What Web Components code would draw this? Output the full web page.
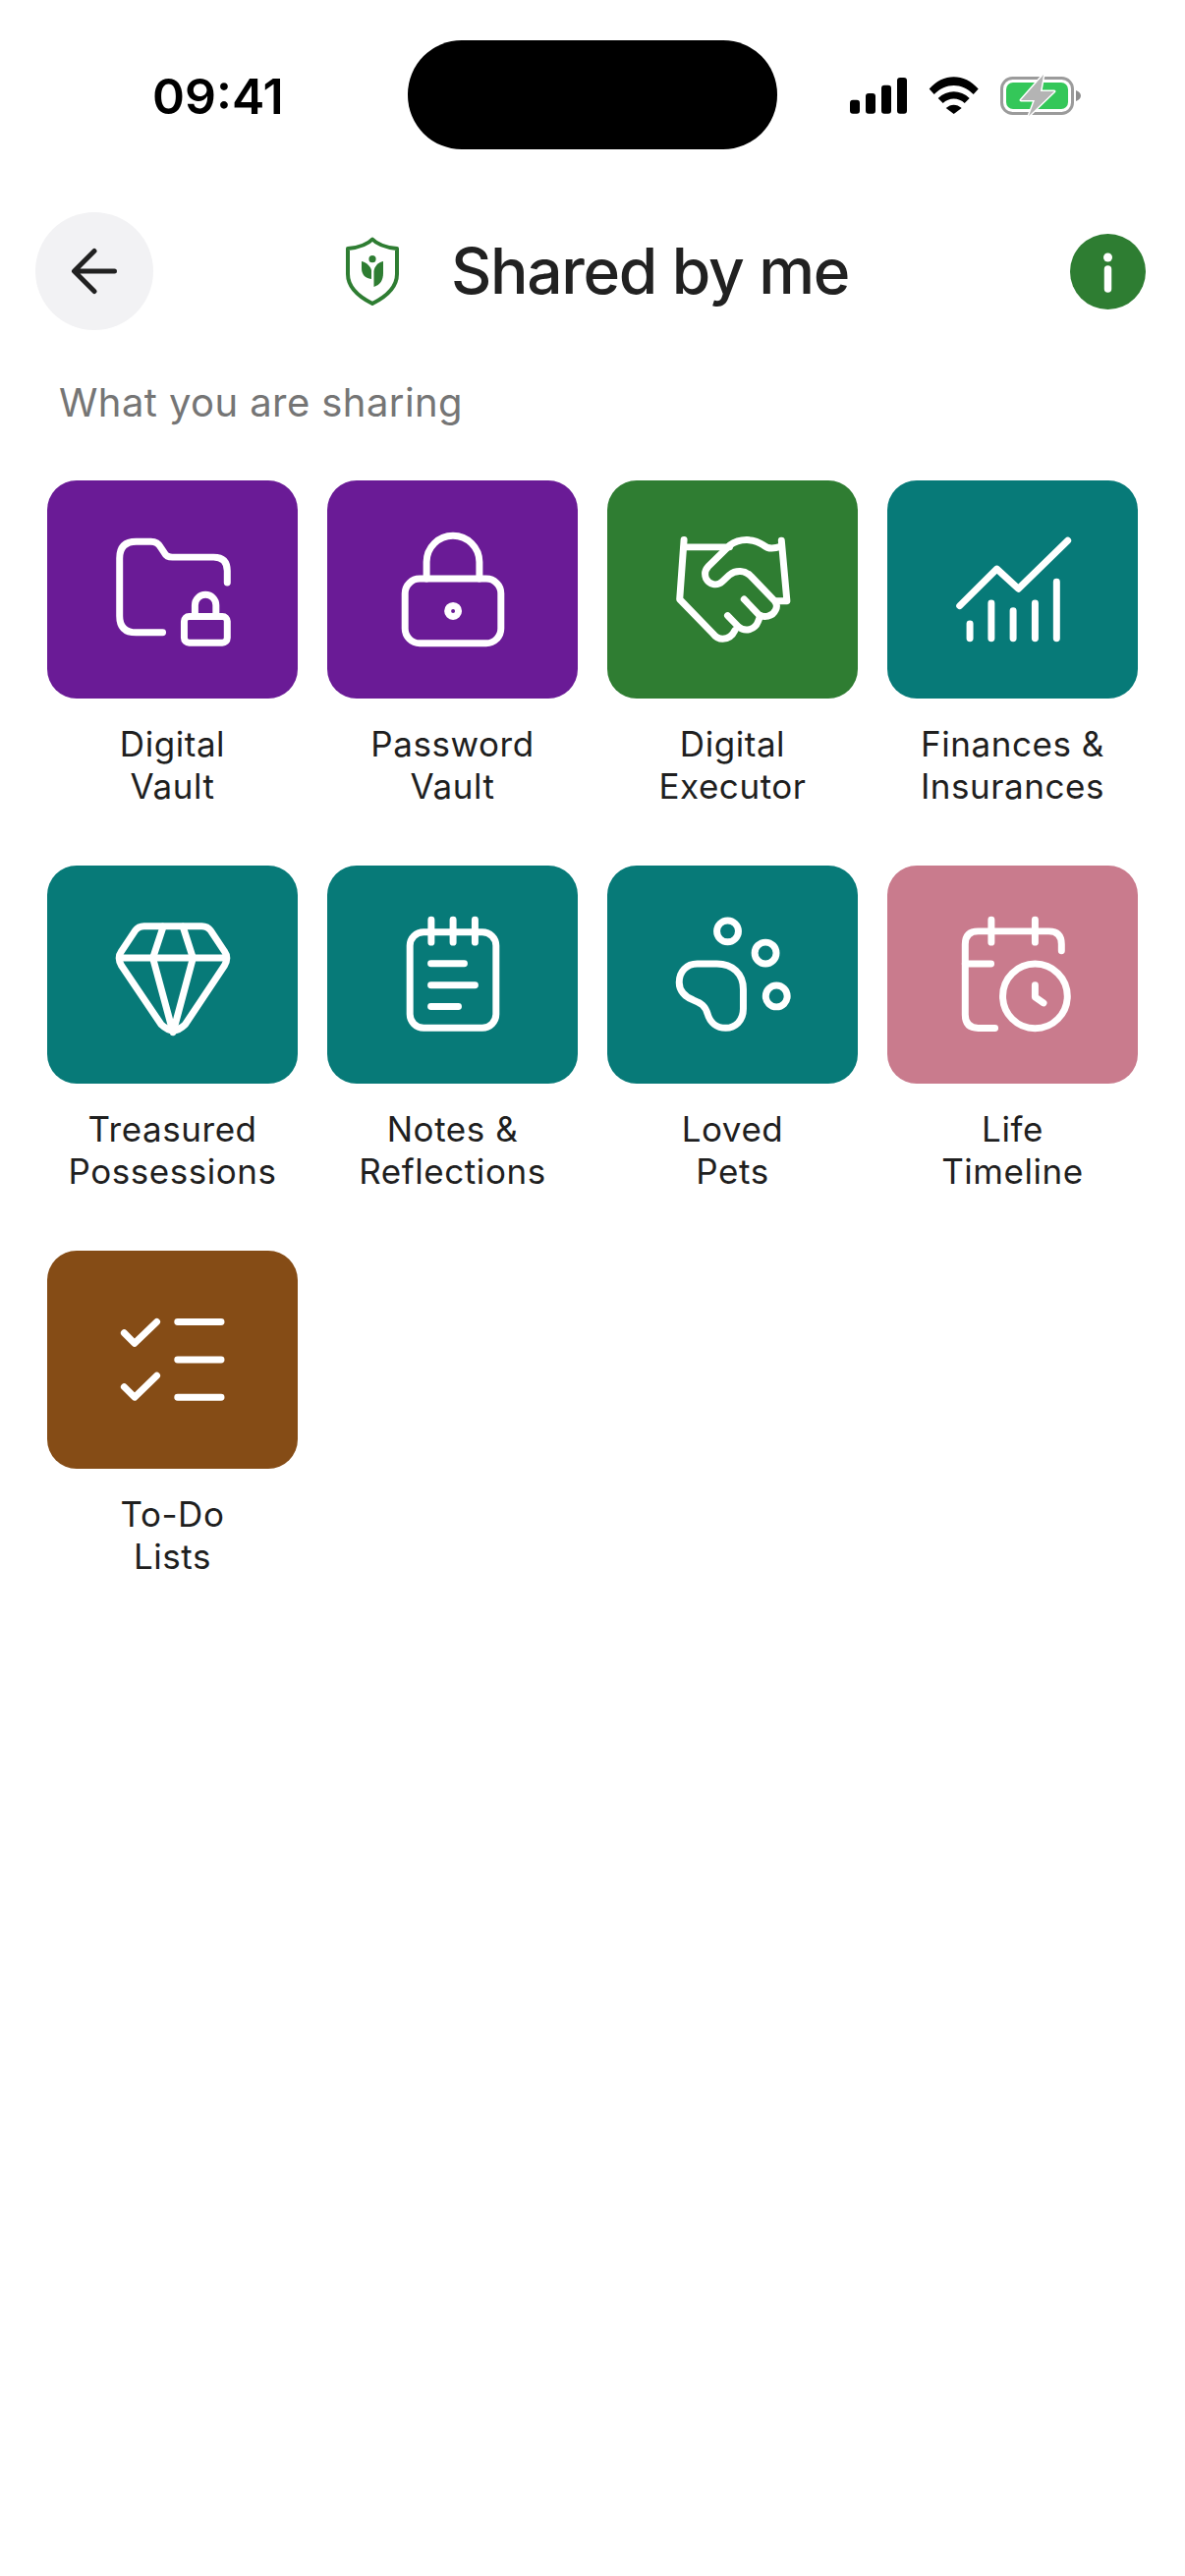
<!DOCTYPE html>
<html lang="en">
<head>
<meta charset="UTF-8">
<title>Shared by me</title>
<style>
    html, body { margin: 0; padding: 0; background: #fff; }
    body { width: 1206px; height: 2622px; overflow: hidden; font-family: Inter, "Liberation Sans", sans-serif; }
</style>
</head>
<body>
<script>
    const ICONS = {
        folder: `<path d="M118 155H91Q74 155 74 138V79Q74 62 91 62H106Q113 62 116 68L120 74Q122 78 128 78H170Q184 78 184 92V104"/>
            <rect x="140" y="138.5" width="44" height="27" rx="5"/>
            <path d="M151 138V127a10.7 10.7 0 0 1 21.5 0V138"/>`,
        lock: `<rect x="79.5" y="100" width="98" height="66" rx="15"/>
            <path d="M101.5 100V83a27 27 0 0 1 54 0V100"/>
            <circle cx="128.6" cy="133" r="5.5"/>`,
        handshake: `<path d="M78.4 60.3L74 121L108 156C111 160 114 161.5 118 161.5C124 161.5 128 158 130.5 152.7"/>
            <path d="M123 137.7L134 149C141 155 151 152 154 144L156.5 137.7"/>
            <path d="M139.8 121L155 137C160 140 169 139 172 132C174 128 173 125 171 122.7L147 97.7C141 91 131 91 125 96L117.5 103C112 108 104 106 101 100C99 95 100 91 103 87.7L125 66C136 58 150 59 160 66C165 70 170 69.5 178 67"/>
            <path d="M78.4 67.7H125"/>
            <path d="M178 61L183.6 122.7H173"/>`,
        chart: `<path d="M74 127.7L112 90L134 110.3L184.4 61"/>
            <path d="M84.4 146V161M106.3 125V161M128.6 132.7V161M151 125V161M173 103.3V161"/>`,
        diamond: `<path d="M99 61.5H158Q164 61.5 167 66L181 87Q186 94 181 102L141 162Q129 174 116.5 162L76 102Q71 94 76 87L90 66Q93 61.5 99 61.5Z"/>
            <path d="M74 94H183"/>
            <path d="M118.6 62L108 94L128.6 170L149 94L138.7 62"/>`,
        notes: `<rect x="84.5" y="67.5" width="88" height="98" rx="14"/>
            <path d="M106.3 55V78M128.6 55V78M151 55V78"/>
            <path d="M106 99.7H140M106 121.7H151M106 143.7H134"/>`,
        paw: `<path d="M92 100H112C128 100 139 110 139 126V146C139 158 131 165.5 121 165.5C112 165.5 105 160 102.5 151C100 143 96 140 88 137C79 134 73.5 127 73.5 119C73.5 108 81 100 92 100Z"/>
            <circle cx="123" cy="66.7" r="11"/>
            <circle cx="161.7" cy="89" r="11"/>
            <circle cx="172.9" cy="133" r="11"/>`,
        timeline: `<path d="M110 165.7H93Q79.6 165.7 79.6 152V80Q79.6 66.7 93 66.7H165Q178 66.7 178 80V86.7"/>
            <path d="M79.6 100H106M106.3 55V78M151 55V78"/>
            <circle cx="151" cy="133" r="33"/>
            <path d="M151 121.7V134L159.6 140"/>`,
        todo: `<path d="M78.7 83.7L89.3 94.3L112 72.3M78.7 138.7L89.3 149.3L112 127.3"/>
            <path d="M133.3 72.3H177.7M133.3 111H177.7M133.3 149.3H177.7"/>`
    };

    const tileTemplate = document.createElement('template');
    tileTemplate.innerHTML = `
<style>
    :host { display: flex; flex-direction: column; align-items: center; min-width: 0; }
    .box { width: 100%; height: 222px; border-radius: 30px; background: var(--tile-color, #077a78); }
    svg { display: block; width: 100%; height: 100%; fill: none; stroke: #fff; stroke-width: 7; stroke-linecap: round; stroke-linejoin: round; }
    .label {
        margin-top: 25px; height: 86px; width: 100%; text-align: center; white-space: nowrap;
        font: 380 35px/43px Inter, "Liberation Sans", sans-serif; letter-spacing: 0.55px; color: #1f1f1f;
    }
</style>
<div class="box"><svg viewBox="0 0 256 222"></svg></div>
<div class="label"><slot></slot></div>
    `;

    class VaultTile extends HTMLElement {
        constructor() {
            super();
            this._shadowRoot = this.attachShadow({mode: "open"});
            this._shadowRoot.appendChild(tileTemplate.content.cloneNode(true));
        }

        connectedCallback() {
            this._shadowRoot.querySelector('.box').style.setProperty('--tile-color', this.getAttribute('color'));
            this._shadowRoot.querySelector('svg').innerHTML = ICONS[this.getAttribute('icon')];
        }
    }

    const statusTemplate = document.createElement('template');
    statusTemplate.innerHTML = `
<style>
    :host { display: flex; align-items: center; height: 111px; padding: 41px 0 64px 155px; }
    .time { width: 260px; font: 600 50px/1 Inter, "Liberation Sans", sans-serif; color: #000; padding-top: 3px; }
    .island { width: 376px; height: 111px; border-radius: 55px; background: #000; flex: none; }
    .icons { margin-left: 74px; display: block; }
</style>
<div class="time">09:41</div>
<div class="island"></div>
<svg class="icons" width="240" height="48" viewBox="865 73 240 48">
    <rect x="865" y="101.7" width="10" height="14" rx="3"/>
    <rect x="881" y="95" width="10" height="20.7" rx="3"/>
    <rect x="897" y="86.7" width="10" height="29" rx="3"/>
    <rect x="913" y="79" width="10" height="36.7" rx="3"/>
    <g transform="translate(945.7 78)">
        <path d="M0 12.5C14 -4 36 -4 50 12.5L45 18C33 6 17 6 5 18Z"/>
        <path d="M9 22C18 13 32 13 41 22L36 27C30 21 20 21 14 27Z"/>
        <path d="M17 32C22 27.5 28 27.5 33 32L25 38Z"/>
    </g>
    <rect x="1019.5" y="79.5" width="72" height="36" rx="11" fill="none" stroke="#9b9b9b" stroke-width="3"/>
    <rect x="1024" y="84" width="63" height="27" rx="7" fill="#34c759"/>
    <path d="M1095 92C1098 93 1100 95 1100 97.500C1100 100 1098 102 1095 103Z" fill="#8e8e8e"/>
    <path d="M1062 76L1039 102H1053L1047 118L1073 93H1059Z" fill="#b4b4b4" stroke="#fff" stroke-width="3" stroke-linejoin="round" paint-order="stroke"/>
</svg>
    `;

    class StatusBar extends HTMLElement {
        constructor() {
            super();
            this.attachShadow({mode: "open"}).appendChild(statusTemplate.content.cloneNode(true));
        }
    }

    const headerTemplate = document.createElement('template');
    headerTemplate.innerHTML = `
<style>
    :host { display: flex; align-items: center; height: 120px; padding: 0 40px 0 36px; }
    .back { width: 120px; height: 120px; border-radius: 50%; background: #f2f2f4; flex: none; }
    .back svg { display: block; }
    .shield { margin-left: 195px; flex: none; display: block; }
    h1 { margin: 0 0 0 52px; font: 500 64px/1 Inter, "Liberation Sans", sans-serif; letter-spacing: -1.3px; color: #212121; white-space: nowrap; }
    .info { margin-left: auto; width: 77px; height: 77px; flex: none; display: block; }
</style>
<div class="back">
    <svg width="120" height="120" viewBox="0 0 120 120" fill="none" stroke="#212121" stroke-width="5" stroke-linecap="round" stroke-linejoin="round">
        <path d="M60 39.500L39.500 60L60 80.500M40.500 60H80.500"/>
    </svg>
</div>
<svg class="shield" width="56" height="70" viewBox="0 0 56 70">
    <path d="M28 2.500C23 8 13 11 3 12V38C3 52 16 62 28 68C40 62 53 52 53 38V12C43 11 33 8 28 2.500Z" fill="none" stroke="#2e7d32" stroke-width="4" stroke-linejoin="round"/>
    <circle cx="28" cy="22.700" r="3.600" fill="#2e7d32"/>
    <path d="M17 25C22 26 26 30 27 34V43C20 42 17 38 17 32Z" fill="#2e7d32"/>
    <path d="M39 25C34 26 30 30 29.500 35V51C36 49 39 44 39 37Z" fill="#2e7d32"/>
</svg>
<h1>Shared by me</h1>
<svg class="info" viewBox="0 0 77 77">
    <circle cx="38.500" cy="38.500" r="38.500" fill="#2e7d32"/>
    <circle cx="38.500" cy="24" r="4.500" fill="#fff"/>
    <path d="M38.500 36V56" stroke="#fff" stroke-width="7.500" stroke-linecap="round"/>
</svg>
    `;

    class PageHeader extends HTMLElement {
        constructor() {
            super();
            this.attachShadow({mode: "open"}).appendChild(headerTemplate.content.cloneNode(true));
        }
    }

    const gridTemplate = document.createElement('template');
    gridTemplate.innerHTML = `
<style>
    :host { display: block; padding: 50px 48px 0 48px; }
    .note { padding-left: 12px; height: 48px; font: 400 40px/48px Inter, "Liberation Sans", sans-serif; letter-spacing: 0.42px; color: #757575; }
    .grid { margin-top: 55px; display: grid; grid-template-columns: repeat(4, 1fr); column-gap: 30px; row-gap: 59px; }
</style>
<div class="note"><slot name="note"></slot></div>
<div class="grid"><slot></slot></div>
    `;

    class TileGrid extends HTMLElement {
        constructor() {
            super();
            this.attachShadow({mode: "open"}).appendChild(gridTemplate.content.cloneNode(true));
        }
    }

    window.customElements.define('vault-tile', VaultTile);
    window.customElements.define('status-bar', StatusBar);
    window.customElements.define('page-header', PageHeader);
    window.customElements.define('tile-grid', TileGrid);
</script>
<status-bar></status-bar>
<page-header></page-header>
<tile-grid>
    <span slot="note">What you are sharing</span>
    <vault-tile icon="folder" color="#6a1b96">Digital<br>Vault</vault-tile>
    <vault-tile icon="lock" color="#6a1b96">Password<br>Vault</vault-tile>
    <vault-tile icon="handshake" color="#2f7d32">Digital<br>Executor</vault-tile>
    <vault-tile icon="chart" color="#077a78">Finances &amp;<br>Insurances</vault-tile>
    <vault-tile icon="diamond" color="#077a78">Treasured<br>Possessions</vault-tile>
    <vault-tile icon="notes" color="#077a78">Notes &amp;<br>Reflections</vault-tile>
    <vault-tile icon="paw" color="#077a78">Loved<br>Pets</vault-tile>
    <vault-tile icon="timeline" color="#c97b8d">Life<br>Timeline</vault-tile>
    <vault-tile icon="todo" color="#854c16">To-Do<br>Lists</vault-tile>
</tile-grid>
</body>
</html>
